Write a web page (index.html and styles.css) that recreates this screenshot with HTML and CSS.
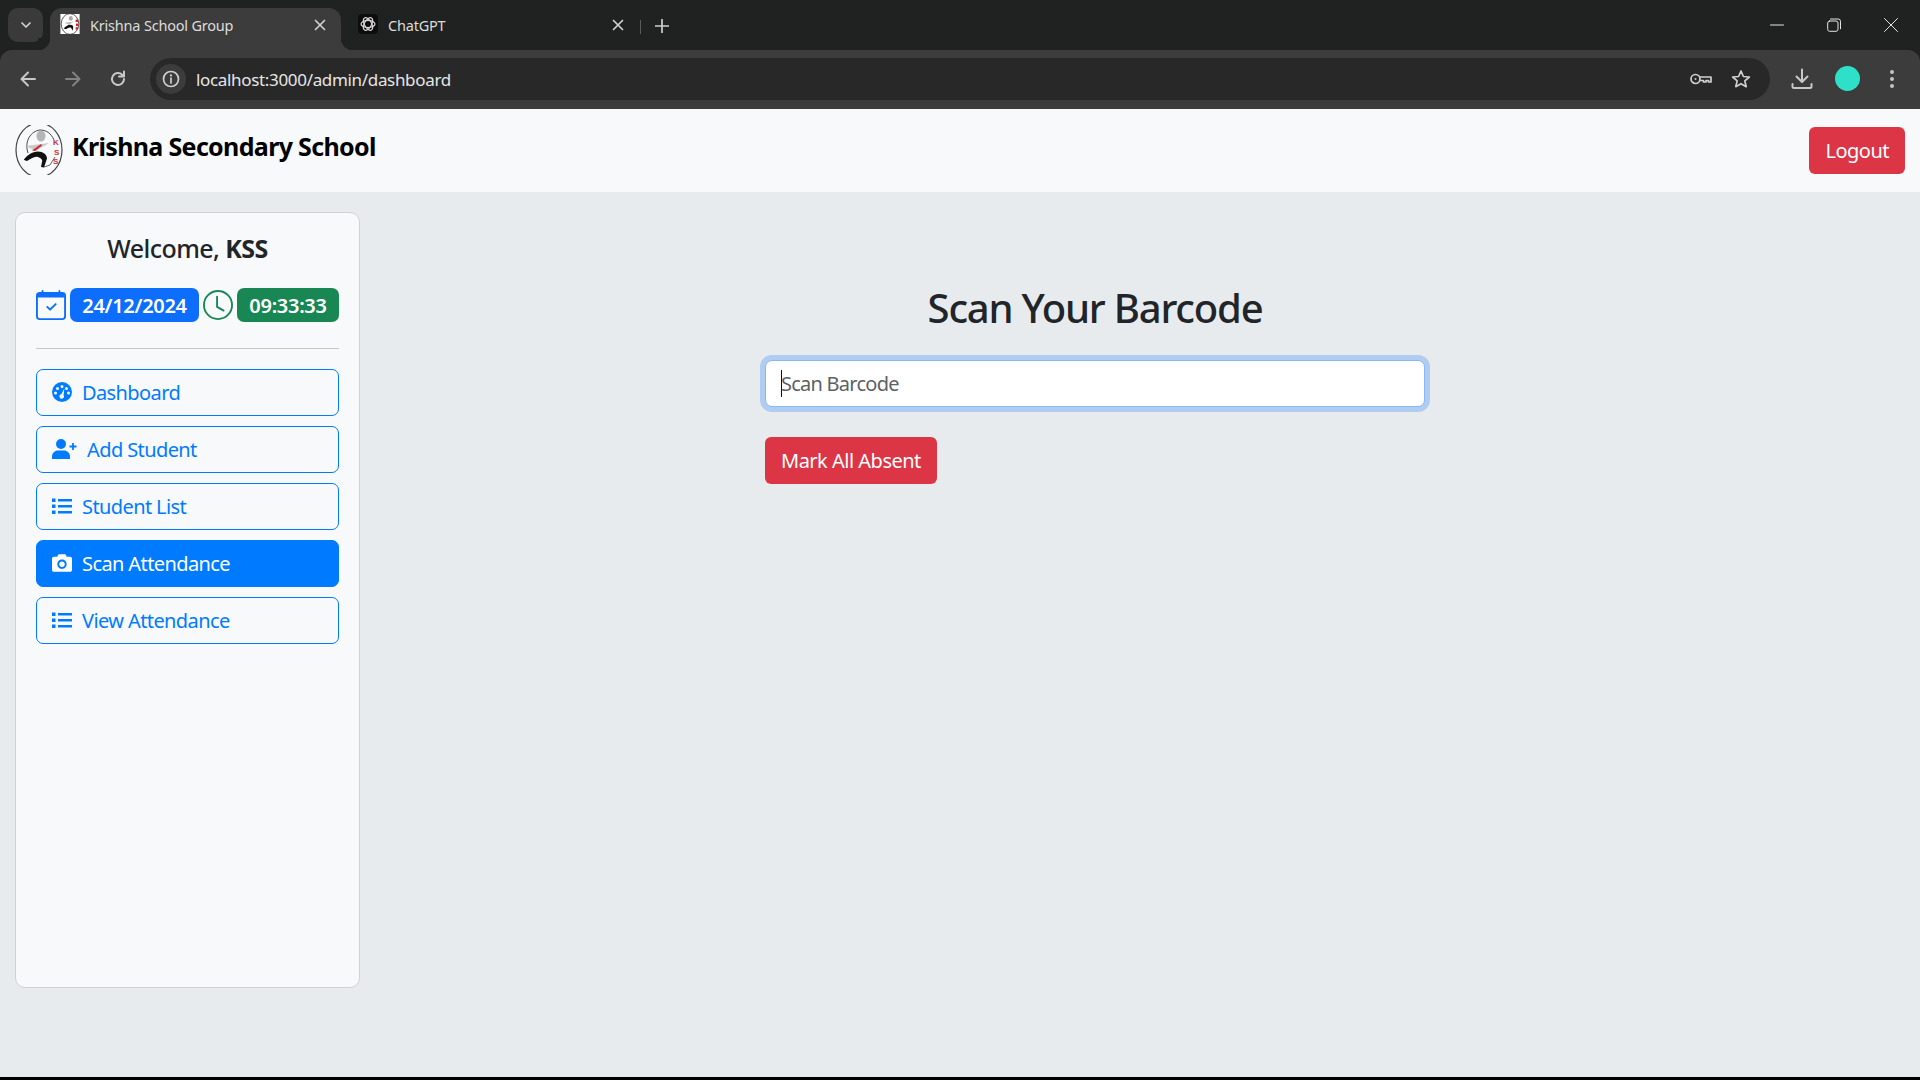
FILE: index.html
```html
<!DOCTYPE html>
<html lang="en">
<head>
<meta charset="utf-8">
<title>Krishna School Group</title>
<link rel="stylesheet" href="styles.css">
</head>
<body>
<div class="window">
  <header class="browser">
    <div class="tabstrip">
      <button class="tabsearch"><svg width="14" height="14" viewBox="0 0 14 14"><path d="M3 5l4 4 4-4" class="st2"/></svg></button>
      <div class="tab tab-active">
        <svg class="favicon" width="20" height="20" viewBox="0 0 48 50"><rect width="48" height="50" fill="#fff"/><ellipse cx="24" cy="25" rx="22" ry="26" fill="none" stroke="#333" stroke-width="2"/><ellipse cx="26" cy="11" rx="5" ry="6" fill="#aaa"/><path d="M10 22l24-3-13 8z" fill="#bbb"/><path d="M8 36c5-4 10-9 16-9 6 0 9 3 8 7l-1 8-5-8c-4-1-9 2-12 4z" fill="#111"/><rect x="38" y="14" width="6" height="6" fill="#d22"/><rect x="39" y="24" width="6" height="6" fill="#d22"/><rect x="38" y="33" width="6" height="6" fill="#d22"/></svg>
        <span class="tab-title">Krishna School Group</span>
        <svg class="tabclose" width="12" height="12" viewBox="0 0 12 12"><path d="M1.5 1.5l9 9M10.5 1.5l-9 9" class="st2"/></svg>
      </div>
      <div class="tab tab-idle">
        <svg class="favicon" width="20" height="20" viewBox="0 0 20 20"><rect width="20" height="20" rx="4" fill="#0d0d0d"/><g fill="none" stroke="#d8d8d8" stroke-width="1.2"><ellipse cx="10" cy="10" rx="7" ry="3.6"/><ellipse cx="10" cy="10" rx="7" ry="3.6" transform="rotate(60 10 10)"/><ellipse cx="10" cy="10" rx="7" ry="3.6" transform="rotate(120 10 10)"/></g></svg>
        <span class="tab-title">ChatGPT</span>
        <svg class="tabclose" width="12" height="12" viewBox="0 0 12 12"><path d="M1.5 1.5l9 9M10.5 1.5l-9 9" class="st2"/></svg>
      </div>
      <span class="tabdivider"></span>
      <svg class="newtab" width="14" height="14" viewBox="0 0 14 14"><path d="M7 .5v13M.5 7h13" class="st2"/></svg>
      <div class="winctl">
        <svg width="14" height="14" viewBox="0 0 14 14"><path d="M.5 7h13" class="st1"/></svg>
        <svg width="14" height="14" viewBox="0 0 14 14"><rect x=".7" y="3" width="10.3" height="10.3" rx="2" class="st1"/><path d="M3.5 1h7.7A2.3 2.3 0 0 1 13.500 3.300v7.500" class="st1"/></svg>
        <svg width="14" height="14" viewBox="0 0 14 14"><path d="M.5.5l13 13M13.500.5l-13 13" class="st1"/></svg>
      </div>
    </div>
    <div class="toolbar">
      <svg class="navicon" width="20" height="20" viewBox="0 0 20 20"><path d="M17 10H4M10 3.500L3.500 10l6.500 6.500" class="st3"/></svg>
      <svg class="navicon dim" width="20" height="20" viewBox="0 0 20 20"><path d="M3 10h13M10 3.500l6.500 6.500-6.500 6.500" class="st3"/></svg>
      <svg class="navicon" width="20" height="20" viewBox="0 0 20 20"><path d="M16 10a6 6 0 1 1-1.800-4.300L16 7.500M16 2.500v5h-5" class="st3"/></svg>
      <div class="omnibox">
        <span class="infochip"><svg width="18" height="18" viewBox="0 0 18 18"><circle cx="9" cy="9" r="7.500" class="st2"/><path d="M9 8v5" class="st2"/><circle cx="9" cy="5.400" r="1.100" fill="#d5d5d5"/></svg></span>
        <span class="url">localhost:3000/admin/dashboard</span>
        <svg class="omni-key" width="24" height="16" viewBox="0 0 24 16"><circle cx="6.500" cy="8" r="4.500" class="st2"/><circle cx="6.500" cy="8" r="1" fill="#c8c8c8"/><path d="M11 6h11v5h-2.500V9.500H17V11h-2.500V9.500H11" class="st2"/></svg>
        <svg class="omni-star" width="20" height="20" viewBox="0 0 20 20"><path d="M10 2l2.400 5.500 6 .5-4.600 3.900 1.400 5.800L10 14.700l-5.200 3 1.400-5.800L1.600 8l6-.5z" class="st2"/></svg>
      </div>
      <svg class="tb-download" width="22" height="22" viewBox="0 0 22 22"><path d="M11 1.500v12M5.500 8.500l5.500 5.500 5.500-5.500" class="st3"/><path d="M1.500 16v2.500a1.500 1.500 0 0 0 1.500 1.500h16a1.500 1.500 0 0 0 1.500-1.500V16" class="st3"/></svg>
      <span class="avatar"></span>
      <svg class="tb-menu" width="6" height="20" viewBox="0 0 6 20"><circle cx="3" cy="3" r="2" fill="#c4c4c4"/><circle cx="3" cy="10" r="2" fill="#c4c4c4"/><circle cx="3" cy="17" r="2" fill="#c4c4c4"/></svg>
    </div>
  </header>

  <nav class="navbar">
    <a class="brand">
      <svg class="logo" width="48" height="50" viewBox="0 0 48 50">
        <ellipse cx="24" cy="25" rx="23" ry="27" fill="none" stroke="#444" stroke-width="1.200"/>
        <path d="M13 28C9 16 16 6 25 5c6 0 11 3 14 10" fill="none" stroke="#444" stroke-width="1"/>
        <path d="M40 32l-5 8-6 2" fill="none" stroke="#666" stroke-width="1"/>
        <ellipse cx="26" cy="11" rx="4.500" ry="5.500" fill="#b5b5b5"/>
        <path d="M11 21l23-3-13 8z" fill="#c9c9c9"/>
        <path d="M17 25.500l9-6.500 1 1.500-7 5.500z" fill="#d3262e"/>
        <path d="M9 35l3 1c4-2 7-5 11-4 3 1 5 3 4 5l-1 5 3 0.500 3-9c0-4-4-7-9-7-6 0-11 4-14 8z" fill="#111"/>
        <text x="38" y="20" class="logo-letter">K</text>
        <text x="39" y="30" class="logo-letter">S</text>
        <text x="38" y="39" class="logo-letter">S</text>
      </svg>
      <span class="brand-name">Krishna Secondary School</span>
    </a>
    <button class="btn btn-danger">Logout</button>
  </nav>

  <div class="page">
    <aside class="sidebar">
      <h5 class="welcome">Welcome, <strong>KSS</strong></h5>
      <div class="stamp">
        <svg class="stamp-icon" width="30" height="30" viewBox="0 0 16 16" fill="#0d6efd"><path d="M10.854 7.854a.5.5 0 0 0-.708-.708L7.500 9.793 6.354 8.646a.5.500 0 1 0-.708.708l1.500 1.500a.5.500 0 0 0 .708 0z"/><path d="M3.500 0a.5.500 0 0 1 .5.500V1h8V.500a.5.500 0 0 1 1 0V1h1a2 2 0 0 1 2 2v11a2 2 0 0 1-2 2H2a2 2 0 0 1-2-2V3a2 2 0 0 1 2-2h1V.500a.5.500 0 0 1 .5-.500M2 2a1 1 0 0 0-1 1v11a1 1 0 0 0 1 1h12a1 1 0 0 0 1-1V4H1V3a1 1 0 0 1 1-1z" /></svg>
        <span class="badge badge-date">24/12/2024</span>
        <svg class="stamp-icon" width="30" height="30" viewBox="0 0 16 16" fill="#198754"><path d="M8 3.500a.5.500 0 0 0-1 0V9a.5.500 0 0 0 .252.434l3.500 2a.5.500 0 0 0 .496-.868L8 8.710z"/><path d="M8 16A8 8 0 1 0 8 0a8 8 0 0 0 0 16m7-8A7 7 0 1 1 1 8a7 7 0 0 1 14 0"/></svg>
        <span class="badge badge-time">09:33:33</span>
      </div>
      <hr class="rule">
      <ul class="menu">
        <li><a class="menu-btn"><svg class="mi" width="20" height="20" viewBox="0 0 20 20"><path fill-rule="evenodd" d="M10 0a10 10 0 1 1 0 20a10 10 0 0 1 0-20zM10 3a1.500 1.500 0 1 0 0 3a1.500 1.500 0 0 0 0-3zM5.500 5a1.500 1.500 0 1 0 0 3a1.500 1.500 0 0 0 0-3zM14.500 5a1.500 1.500 0 1 0 0 3a1.500 1.500 0 0 0 0-3zM3.500 9.500a1.500 1.500 0 1 0 0 3a1.500 1.500 0 0 0 0-3zM16.500 9.500a1.500 1.500 0 1 0 0 3a1.500 1.500 0 0 0 0-3zM12.300 6.600L9.300 12.300a2.200 2.200 0 1 0 2.300 1z"/></svg>Dashboard</a></li>
        <li><a class="menu-btn"><svg class="mi mi-wide" width="25" height="20" viewBox="0 0 25 20"><circle cx="9" cy="5" r="5"/><path d="M0 20v-2.500C0 14 3 11.500 6 11.500h6c3 0 6 2.500 6 6V20z"/><path d="M21 4v7M17.500 7.500h7" fill="none" stroke="currentColor" stroke-width="1.800"/></svg>Add Student</a></li>
        <li><a class="menu-btn"><svg class="mi" width="20" height="20" viewBox="0 0 20 20"><path d="M0 2.500h3.500V6H0zM0 8.500h3.500V12H0zM0 14.500h3.500V18H0zM6 3h14v2.500H6zM6 9h14v2.500H6zM6 15h14v2.500H6z"/></svg>Student List</a></li>
        <li><a class="menu-btn menu-active"><svg class="mi" width="20" height="20" viewBox="0 0 512 512"><path d="M512 144v288c0 26.500-21.500 48-48 48H48c-26.500 0-48-21.500-48-48V144c0-26.500 21.500-48 48-48h88l12.300-32.900c7-18.700 24.900-31.100 44.900-31.100h125.500c20 0 37.900 12.400 44.900 31.100L376 96h88c26.500 0 48 21.500 48 48zM376 288c0-66.200-53.800-120-120-120s-120 53.800-120 120 53.800 120 120 120 120-53.800 120-120zm-48 0c0 39.700-32.300 72-72 72s-72-32.300-72-72 32.300-72 72-72 72 32.300 72 72z"/></svg>Scan Attendance</a></li>
        <li><a class="menu-btn"><svg class="mi" width="20" height="20" viewBox="0 0 20 20"><path d="M0 2.500h3.500V6H0zM0 8.500h3.500V12H0zM0 14.500h3.500V18H0zM6 3h14v2.500H6zM6 9h14v2.500H6zM6 15h14v2.500H6z"/></svg>View Attendance</a></li>
      </ul>
    </aside>
    <main class="main">
      <section class="scanner">
        <h2 class="scan-title">Scan Your Barcode</h2>
        <div class="field">
          <input class="scan-input" type="text" placeholder="Scan Barcode">
          <span class="caret"></span>
        </div>
        <button class="btn btn-danger">Mark All Absent</button>
      </section>
    </main>
  </div>
  <div class="taskline"></div>
</div>
</body>
</html>
```
FILE: styles.css
```css
* { box-sizing: border-box; }
html, body { margin: 0; height: 100%; }
body { font-family: "Noto Sans", "Open Sans", sans-serif; font-size: 20px; color: #212529; background: #e8ebee; overflow: hidden; }
.window { display: flex; flex-direction: column; height: 1080px; }

/* stroke helpers */
.st1, .st2, .st3 { fill: none; stroke-linecap: round; stroke-linejoin: round; }
.st1 { stroke: #e4e4e4; stroke-width: 1; }
.st2 { stroke: #d0d0d0; stroke-width: 1.700; }
.st3 { stroke: #c8c8c8; stroke-width: 2; }

/* browser chrome */
.browser { background: #202221; flex: none; }
.tabstrip { height: 50px; display: flex; align-items: flex-start; padding: 8px 0 0 8px; }
.tabsearch { width: 35px; height: 34px; border: 0; padding: 0; border-radius: 10px; background: #3a3a3a; display: flex; align-items: center; justify-content: center; }
.tab { position: relative; height: 42px; width: 291px; display: flex; align-items: center; padding: 0 15px 8px 10px; color: #dcdcdc; font-size: 14.500px; letter-spacing: -.2px; }
.tab-active { margin-left: 7px; background: #3c3c3c; border-radius: 12px 12px 0 0; }
.tab-active::before, .tab-active::after { content: ""; position: absolute; bottom: 0; width: 12px; height: 12px; background: radial-gradient(circle at 0 0, #202221 12px, #3c3c3c 12.500px); }
.tab-active::before { left: -12px; }
.tab-active::after { right: -12px; background: radial-gradient(circle at 100% 0, #202221 12px, #3c3c3c 12.500px); }
.tab-idle { margin-left: 0; width: 295px; padding-left: 17px; padding-right: 12px; }
.favicon { flex: none; margin-top: -2px; }
.tab-title { margin-left: 10px; flex: 1; white-space: nowrap; }
.tabclose { flex: none; }
.tabdivider { width: 1px; height: 14px; background: #5a5a5a; margin: 12px 0 0 4px; }
.newtab { margin: 11px 0 0 14px; flex: none; }
.winctl { margin-left: auto; margin-top: 10px; display: flex; gap: 43px; padding-right: 22px; }

.toolbar { height: 59px; background: #3c3c3c; border-radius: 12px 12px 0 0; display: flex; align-items: center; padding-left: 18px; }
.navicon { flex: none; margin-right: 25px; margin-top: -2px; }
.omnibox { flex: none; margin-left: -3px; width: 1620px; height: 42px; border-radius: 21px; background: #282828; display: flex; align-items: center; padding: 0 19px 0 6px; margin-top: -1px; }
.navicon.dim { opacity: .5; }
.infochip { width: 30px; height: 30px; border-radius: 50%; background: #3c3c3c; display: flex; align-items: center; justify-content: center; flex: none; }
.url { margin-left: 10px; flex: 1; color: #e6e6e6; font-size: 17px; letter-spacing: -.33px; white-space: nowrap; }
.omni-key { margin-right: 18px; flex: none; }
.tb-download { margin-left: 21px; flex: none; margin-top: -2px; }
.avatar { width: 25px; height: 25px; border-radius: 50%; background: #2fe0c9; margin-left: 22px; flex: none; margin-top: -2px; }
.tb-menu { margin-left: 29px; flex: none; margin-top: -2px; }

/* navbar */
.navbar { flex: none; height: 83px; background: #f8f9fa; display: flex; align-items: center; justify-content: space-between; padding: 0 15px; }
.brand { display: flex; align-items: center; gap: 9px; margin-bottom: 1px; }
.logo { flex: none; }
.logo-letter { font-family: "Liberation Sans", sans-serif; font-size: 8px; font-weight: 700; fill: #c8323a; }
.brand-name { font-size: 25px; font-weight: 700; color: #000; margin: -8px 0 0 0; letter-spacing: -.66px; }

.btn { border: 1px solid transparent; border-radius: 6px; height: 47px; padding: 0 15px; font: inherit; letter-spacing: -.5px; }
.btn-danger { background: #dc3545; color: #fff; }

/* page */
.page { flex: 1; min-height: 0; display: flex; align-items: flex-start; padding: 20px 0 0 15px; }
.sidebar { flex: none; width: 345px; height: 776px; background: #f8f9fa; border: 1px solid #cfd1d3; border-radius: 10px; padding: 20px; }
.welcome { margin: 0 0 25px; font-size: 25px; font-weight: 500; line-height: 30px; text-align: center; letter-spacing: -.55px; }
.welcome strong { font-weight: 700; }
.stamp { display: flex; align-items: center; justify-content: space-between; height: 34px; }
.stamp-icon { flex: none; }
.badge { display: flex; align-items: center; justify-content: center; height: 34px; border-radius: 7px; color: #fff; font-size: 20px; font-weight: 600; letter-spacing: -.3px; }
.badge-date { width: 129px; background: #0d6efd; }
.badge-time { width: 102px; background: #198754; }
.rule { border: 0; border-top: 1px solid #c6c7c8; margin: 26px 0 20px; }
.menu { list-style: none; margin: 0; padding: 0; display: flex; flex-direction: column; gap: 10px; }
.menu-btn { display: flex; align-items: center; height: 47px; padding: 0 15px; border: 1px solid #007bff; border-radius: 7px; color: #007bff; letter-spacing: -.6px; }
.menu-active { background: #007bff; color: #fff; }
.mi { fill: currentColor; flex: none; margin-right: 10px; margin-top: -2px; }

/* main */
.main { flex: 1; padding: 72px 0 0 405px; }
.scanner { width: 660px; }
.scan-title { margin: 0 0 28px; font-size: 40px; font-weight: 500; line-height: 48px; text-align: center; letter-spacing: -1.2px; }
.field { position: relative; margin-bottom: 30px; }
.scan-input { display: block; width: 100%; height: 47px; padding: 0 15px; border: 1px solid #86b7fe; border-radius: 7px; background: #fff; font: inherit; letter-spacing: -.75px; outline: 0; box-shadow: 0 0 0 5px rgba(13, 110, 253, .25); }
.scan-input::placeholder { color: #5c6166; opacity: 1; }
.caret { position: absolute; left: 16px; top: 10px; width: 1px; height: 27px; background: #111; }
.taskline { flex: none; height: 3px; background: #000; }
```
